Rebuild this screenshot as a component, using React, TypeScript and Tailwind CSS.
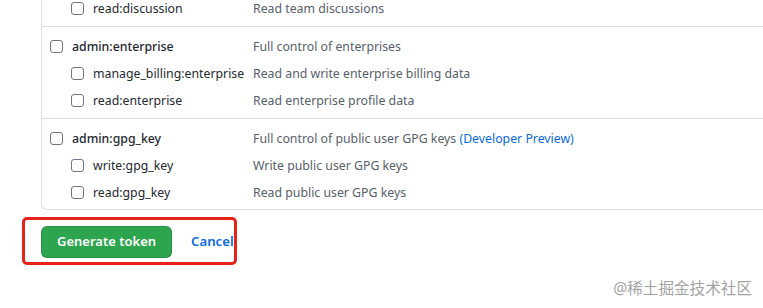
type Scope = { name: string; desc: string; preview?: boolean };
type Group = { top?: Scope; children: Scope[] };

const groups: Group[] = [
  {
    top: { name: "admin:enterprise", desc: "Full control of enterprises" },
    children: [
      { name: "manage_billing:enterprise", desc: "Read and write enterprise billing data" },
      { name: "read:enterprise", desc: "Read enterprise profile data" },
    ],
  },
  {
    top: { name: "admin:gpg_key", desc: "Full control of public user GPG keys", preview: true },
    children: [
      { name: "write:gpg_key", desc: "Write public user GPG keys" },
      { name: "read:gpg_key", desc: "Read public user GPG keys" },
    ],
  },
];

function Box() {
  return <span className="block w-[13px] h-[13px] shrink-0 rounded-[3px] border border-[#6e7781] bg-white" />;
}

function Row({ scope, child }: { scope: Scope; child?: boolean }) {
  return (
    <div className="flex items-center h-[27px]">
      <div className={`flex items-center gap-[9px] w-[211px] shrink-0 ${child ? "pl-[29px]" : "pl-[8px]"}`}>
        <Box />
        <span className={child ? "pt-[2px] text-[#24292f]" : "pt-[2px] text-[#24292f] font-medium"}>{scope.name}</span>
      </div>
      <span className="pt-[2px] text-[#57606a]">
        {scope.desc}
        {scope.preview && (
          <>
            {" "}
            <span className="text-[#0969da]">(Developer Preview)</span>
          </>
        )}
      </span>
    </div>
  );
}

export default function App() {
  return (
    <div
      className="relative w-[763px] h-[308px] overflow-hidden bg-white text-[12.3px]"
      style={{ fontFamily: '"Noto Sans", "Open Sans", sans-serif' }}
    >
      <div className="ml-[41px] w-[740px] -mt-[5px] rounded-b-[6px] border-l border-r border-b border-[#d8dee4]">
        <div className="pb-[4px] border-b border-[#d8dee4]">
          <Row scope={{ name: "read:discussion", desc: "Read team discussions" }} child />
        </div>
        {groups.map((g, i) => (
          <div
            key={i}
            className={`pt-[6px] ${i === 0 ? "pb-[4px] border-b border-[#d8dee4]" : "pb-[3px]"}`}
          >
            {g.top && <Row scope={g.top} />}
            {g.children.map((c) => (
              <Row key={c.name} scope={c} child />
            ))}
          </div>
        ))}
      </div>

      <div className="flex items-center gap-[19px] ml-[41px] mt-[16px]">
        <button className="h-[32px] px-[15px] rounded-[6px] bg-[#2da44e] text-white text-[13px] font-semibold border border-[rgba(27,31,36,0.15)]">
          Generate token
        </button>
        <span className="text-[#0969da] text-[13.2px] font-semibold">Cancel</span>
      </div>

      <div className="absolute left-[22px] top-[217px] w-[215px] h-[48px] rounded-[5px] border-[3px] border-[#e5231b]" />

      <div
        className="absolute right-[11px] top-[277px] text-[15.6px] text-[#a3a3a3]"
        style={{ fontFamily: '"Noto Sans", "Noto Sans CJK SC", sans-serif' }}
      >
        @稀土掘金技术社区
      </div>
    </div>
  );
}
